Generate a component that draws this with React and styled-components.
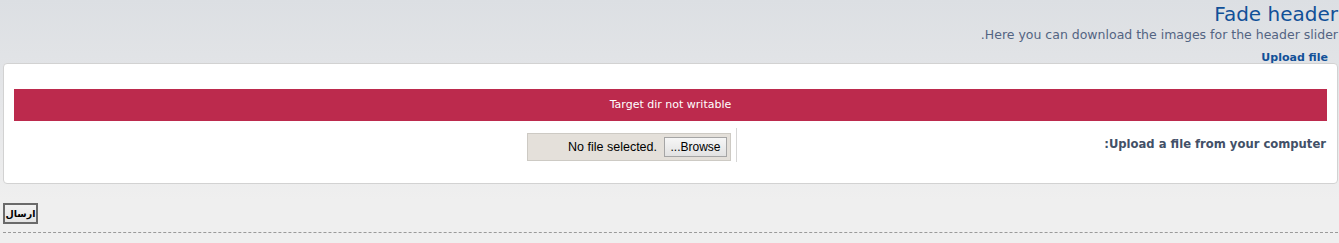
import React from 'react'
import styled, { createGlobalStyle } from 'styled-components'

const GlobalStyle = createGlobalStyle`
  html, body {
    margin: 0;
    padding: 0;
  }
  body {
    width: 1339px;
    height: 243px;
    overflow: hidden;
    font-family: "DejaVu Sans", Verdana, sans-serif;
    background: linear-gradient(to bottom, #dcdfe3 0px, #e6e7e9 110px, #efefef 200px, #efefef 243px);
    direction: rtl;
  }
`

const Page = styled.div`
  padding: 0 1px 0 0;
`

const Title = styled.h1`
  margin: 0;
  padding-top: 1px;
  font-size: 20px;
  font-weight: normal;
  line-height: 26px;
  color: #115098;
`

const Intro = styled.p`
  margin: 0;
  font-size: 12.5px;
  line-height: 15px;
  color: #536482;
`

const Legend = styled.div`
  margin-top: 9px;
  padding-right: 10px;
  font-size: 11px;
  font-weight: bold;
  line-height: 13px;
  color: #115098;
`

const Panel = styled.div`
  margin: -1px 0 0 3px;
  padding: 25px 10px 21px 10px;
  background: #fff;
  border: 1px solid #d2d2d2;
  border-radius: 4px;
`

const ErrorBar = styled.div`
  height: 32px;
  background: #bc2a4d;
  color: #fff;
  font-size: 11px;
  line-height: 32px;
  text-align: center;
`

const Row = styled.div`
  display: flex;
  margin-top: 7px;
`

const Label = styled.div`
  width: 591px;
  padding-top: 9px;
  padding-right: 1px;
  font-size: 11.6px;
  font-weight: bold;
  color: #425067;
  border-left: 1px solid #d6d6d6;
  height: 34px;
  box-sizing: border-box;
`

const FileBox = styled.div`
  display: flex;
  flex-direction: row-reverse;
  align-items: center;
  gap: 7px;
  margin: 5px 5px 0 0;
  width: 204px;
  height: 28px;
  box-sizing: border-box;
  padding: 0 3px;
  background: #e4e0da;
  border: 1px solid #cdcac4;
  font-family: "Liberation Sans", Arial, sans-serif;
  font-size: 12.5px;
  color: #000;
  direction: ltr;
`

const Browse = styled.div`
  width: 63px;
  height: 20px;
  box-sizing: border-box;
  border: 1px solid #a5a5a5;
  background: linear-gradient(#f6f6f6, #e2e2e2);
  font-size: 12px;
  line-height: 18px;
  text-align: center;
  direction: rtl;
`

const Footer = styled.div`
  display: flex;
  justify-content: flex-end;
  padding: 19px 0 0 0;
`

const SubmitButton = styled.button`
  margin-left: 3px;
  width: 35px;
  height: 21px;
  padding: 0;
  background: linear-gradient(#f2f2f2, #e4e4e4);
  border: 2px solid #6a6a6a;
  font-family: "DejaVu Sans", sans-serif;
  font-size: 9.5px;
  font-weight: bold;
  color: #000;
  line-height: 15px;
`

const Dashed = styled.div`
  margin: 8px 0 0 3px;
  border-top: 1px dashed #9a9a9a;
`

export default function App() {
  return (
    <Page>
      <GlobalStyle />
      <Title>Fade header</Title>
      <Intro>Here you can download the images for the header slider.</Intro>
      <Legend>Upload file</Legend>
      <Panel>
        <ErrorBar>Target dir not writable</ErrorBar>
        <Row>
          <Label>Upload a file from your computer:</Label>
          <FileBox>
            <Browse>Browse...</Browse>
            <span>No file selected.</span>
          </FileBox>
        </Row>
      </Panel>
      <Footer>
        <SubmitButton>ارسال</SubmitButton>
      </Footer>
      <Dashed />
    </Page>
  )
}
